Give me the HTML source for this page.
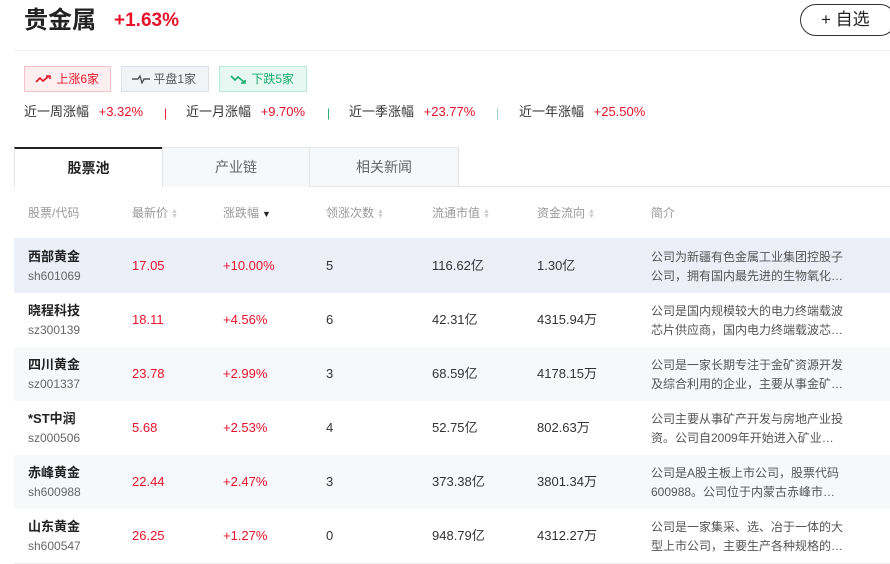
<!DOCTYPE html>
<html><head><meta charset="utf-8"><style>
*{margin:0;padding:0;box-sizing:border-box}
body{width:890px;height:564px;overflow:hidden;background:#fff;font-family:"Liberation Sans","Noto Sans CJK SC",sans-serif;color:#333;position:relative}
.a{position:absolute;white-space:nowrap}
.red{color:#e6132a}
.row{position:absolute;left:14px;width:876px;height:54px}
.row .a{font-size:13px;line-height:16px}
.row .nm{font-weight:bold;font-size:13px;color:#222}
.row .cd{font-size:12px;color:#666}
.row .ds{font-size:12px;color:#555;line-height:19px}
.h{font-size:12px;color:#999;top:205px;line-height:16px}
.ar{display:inline-block;width:5px;margin-left:3px;vertical-align:middle;font-size:7px;line-height:5px;color:#ccc}
</style></head><body>
<div class="a" style="left:24px;top:5px;font-size:24px;line-height:32px;font-weight:bold;color:#222">贵金属</div>
<div class="a red" style="left:114px;top:10px;font-size:19px;line-height:22px;font-weight:bold">+1.63%</div>
<div class="a" style="left:800px;top:4px;width:96px;height:32px;border:1px solid #333;border-radius:16px;font-size:17px;line-height:30px;padding-left:20px;color:#222">+ 自选</div>
<div class="a" style="left:14px;top:50px;width:876px;height:1px;background:#eee"></div>

<div class="a" style="left:24px;top:66px;width:87px;height:26px;border:1px solid #f5c2c8;background:#fdeff0;color:#e6132a;font-size:12px;line-height:24px;padding-left:10px">
<svg width="18" height="10" style="vertical-align:-1px"><path d="M1 8 L5 4 L8 7 L14 2 M11 2 H15 V5" stroke="#e6132a" stroke-width="1.6" fill="none"/></svg> 上涨6家</div>
<div class="a" style="left:121px;top:66px;width:88px;height:26px;border:1px solid #dde0e8;background:#f2f3f7;color:#555;font-size:12px;line-height:24px;padding-left:10px">
<svg width="18" height="10" style="vertical-align:-1px"><path d="M0 5 H6 L8 2 L10 9 L12 5 H18" stroke="#555" stroke-width="1.4" fill="none"/></svg> 平盘1家</div>
<div class="a" style="left:219px;top:66px;width:88px;height:26px;border:1px solid #b8ead6;background:#e6f8f1;color:#1aab6e;font-size:12px;line-height:24px;padding-left:10px">
<svg width="18" height="10" style="vertical-align:-1px"><path d="M1 2 L5 6 L8 3 L14 8 M11 9 H15 V6" stroke="#1aab6e" stroke-width="1.6" fill="none"/></svg> 下跌5家</div>

<div class="a" style="left:24px;top:104px;font-size:13px;line-height:16px">近一周涨幅 <span class="red" style="margin-left:6px">+3.32%</span></div>
<div class="a" style="left:164px;top:105px;font-size:12px;line-height:16px;color:#e6132a">|</div>
<div class="a" style="left:186px;top:104px;font-size:13px;line-height:16px">近一月涨幅 <span class="red" style="margin-left:6px">+9.70%</span></div>
<div class="a" style="left:327px;top:105px;font-size:12px;line-height:16px;color:#1aab6e">|</div>
<div class="a" style="left:349px;top:104px;font-size:13px;line-height:16px">近一季涨幅 <span class="red" style="margin-left:6px">+23.77%</span></div>
<div class="a" style="left:496px;top:105px;font-size:12px;line-height:16px;color:#9cc">|</div>
<div class="a" style="left:519px;top:104px;font-size:13px;line-height:16px">近一年涨幅 <span class="red" style="margin-left:6px">+25.50%</span></div>

<div class="a" style="left:14px;top:186px;width:876px;height:1px;background:#e5e5e5"></div>
<div class="a" style="left:14px;top:147px;width:148px;height:40px;border-top:2px solid #222;border-left:1px solid #e5e5e5;background:#fff;font-size:14px;font-weight:bold;text-align:center;line-height:38px;color:#222">股票池</div>
<div class="a" style="left:162px;top:147px;width:148px;height:40px;border:1px solid #e5e5e5;border-bottom:none;background:#f7f8fa;font-size:14px;text-align:center;line-height:38px;color:#666">产业链</div>
<div class="a" style="left:310px;top:147px;width:149px;height:39px;border:1px solid #e5e5e5;border-left:none;border-bottom:none;background:#f7f8fa;font-size:14px;text-align:center;line-height:38px;color:#666">相关新闻</div>

<div class="a h" style="left:28px">股票/代码</div>
<div class="a h" style="left:132px">最新价<span class="ar">▲<br>▼</span></div>
<div class="a h" style="left:223px">涨跌幅<span style="color:#222;font-size:9px;margin-left:3px">▼</span></div>
<div class="a h" style="left:326px">领涨次数<span class="ar">▲<br>▼</span></div>
<div class="a h" style="left:432px">流通市值<span class="ar">▲<br>▼</span></div>
<div class="a h" style="left:537px">资金流向<span class="ar">▲<br>▼</span></div>
<div class="a h" style="left:651px">简介</div>
<div class="a" style="left:14px;top:238px;width:876px;height:1px;background:#eceef5"></div>

<div class="row" style="top:239px;background:#eceef8">
<div class="a nm" style="left:14px;top:10px">西部黄金</div><div class="a cd" style="left:14px;top:29px">sh601069</div>
<div class="a red" style="left:118px;top:19px">17.05</div><div class="a red" style="left:209px;top:19px">+10.00%</div>
<div class="a" style="left:312px;top:19px">5</div><div class="a" style="left:418px;top:19px">116.62亿</div><div class="a" style="left:523px;top:19px">1.30亿</div>
<div class="a ds" style="left:637px;top:9px">公司为新疆有色金属工业集团控股子<br>公司，拥有国内最先进的生物氧化…</div></div>

<div class="row" style="top:293px;background:#fff">
<div class="a nm" style="left:14px;top:10px">晓程科技</div><div class="a cd" style="left:14px;top:29px">sz300139</div>
<div class="a red" style="left:118px;top:19px">18.11</div><div class="a red" style="left:209px;top:19px">+4.56%</div>
<div class="a" style="left:312px;top:19px">6</div><div class="a" style="left:418px;top:19px">42.31亿</div><div class="a" style="left:523px;top:19px">4315.94万</div>
<div class="a ds" style="left:637px;top:9px">公司是国内规模较大的电力终端载波<br>芯片供应商，国内电力终端载波芯…</div></div>

<div class="row" style="top:347px;background:#f7f8fa">
<div class="a nm" style="left:14px;top:10px">四川黄金</div><div class="a cd" style="left:14px;top:29px">sz001337</div>
<div class="a red" style="left:118px;top:19px">23.78</div><div class="a red" style="left:209px;top:19px">+2.99%</div>
<div class="a" style="left:312px;top:19px">3</div><div class="a" style="left:418px;top:19px">68.59亿</div><div class="a" style="left:523px;top:19px">4178.15万</div>
<div class="a ds" style="left:637px;top:9px">公司是一家长期专注于金矿资源开发<br>及综合利用的企业，主要从事金矿…</div></div>

<div class="row" style="top:401px;background:#fff">
<div class="a nm" style="left:14px;top:10px">*ST中润</div><div class="a cd" style="left:14px;top:29px">sz000506</div>
<div class="a red" style="left:118px;top:19px">5.68</div><div class="a red" style="left:209px;top:19px">+2.53%</div>
<div class="a" style="left:312px;top:19px">4</div><div class="a" style="left:418px;top:19px">52.75亿</div><div class="a" style="left:523px;top:19px">802.63万</div>
<div class="a ds" style="left:637px;top:9px">公司主要从事矿产开发与房地产业投<br>资。公司自2009年开始进入矿业…</div></div>

<div class="row" style="top:455px;background:#f7f8fa">
<div class="a nm" style="left:14px;top:10px">赤峰黄金</div><div class="a cd" style="left:14px;top:29px">sh600988</div>
<div class="a red" style="left:118px;top:19px">22.44</div><div class="a red" style="left:209px;top:19px">+2.47%</div>
<div class="a" style="left:312px;top:19px">3</div><div class="a" style="left:418px;top:19px">373.38亿</div><div class="a" style="left:523px;top:19px">3801.34万</div>
<div class="a ds" style="left:637px;top:9px">公司是A股主板上市公司，股票代码<br>600988。公司位于内蒙古赤峰市…</div></div>

<div class="row" style="top:509px;background:#fff">
<div class="a nm" style="left:14px;top:10px">山东黄金</div><div class="a cd" style="left:14px;top:29px">sh600547</div>
<div class="a red" style="left:118px;top:19px">26.25</div><div class="a red" style="left:209px;top:19px">+1.27%</div>
<div class="a" style="left:312px;top:19px">0</div><div class="a" style="left:418px;top:19px">948.79亿</div><div class="a" style="left:523px;top:19px">4312.27万</div>
<div class="a ds" style="left:637px;top:9px">公司是一家集采、选、冶于一体的大<br>型上市公司，主要生产各种规格的…</div></div>
<div class="a" style="left:14px;top:563px;width:876px;height:1px;background:#eee"></div>
</body></html>
